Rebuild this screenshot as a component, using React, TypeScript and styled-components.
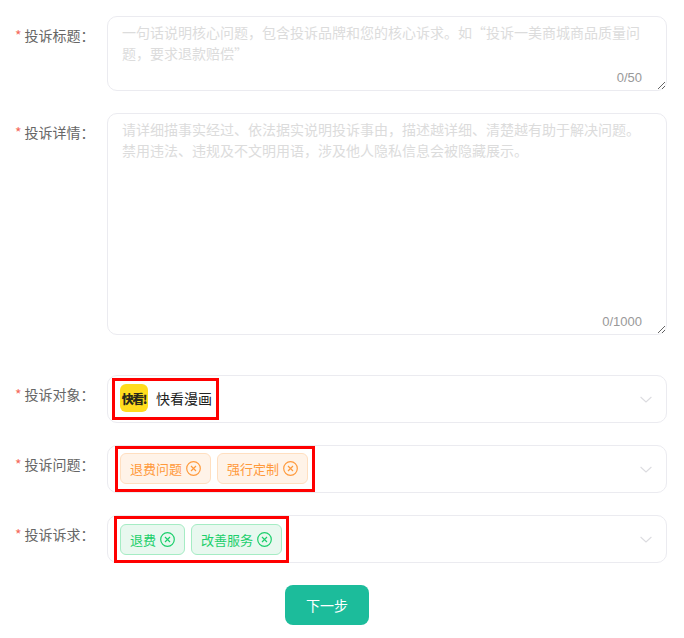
import React, { FunctionComponent } from 'react'
import styled, { createGlobalStyle } from 'styled-components'

const Global = createGlobalStyle`
  body {
    margin: 0;
    background: #fff;
    font-family: "Noto Sans CJK SC", "Liberation Sans", sans-serif;
  }
`

const Form = styled.form`
  width: 684px;
  height: 638px;
  box-sizing: border-box;
  padding: 16px 17px 0 15px;
  display: flex;
  flex-direction: column;
`

const Row = styled.div<{ $gap: number }>`
  display: flex;
  margin-bottom: ${({ $gap }) => $gap}px;
`

const Label = styled.label`
  width: 92px;
  flex-shrink: 0;
  font-size: 14px;
  line-height: 20px;
  color: #666;
  padding-top: 9px;
  white-space: nowrap;

  &::before {
    content: '*';
    color: #f5695a;
    margin-right: 3px;
  }
`

const AreaWrap = styled.div`
  position: relative;
  flex: 1;
  display: flex;
`

const Area = styled.textarea<{ $height: number }>`
  width: 100%;
  height: ${({ $height }) => $height}px;
  box-sizing: border-box;
  border: 1px solid #ebebf0;
  border-radius: 10px;
  padding: 5px 20px 6px 14px;
  font-family: inherit;
  font-size: 14px;
  line-height: 21px;
  color: #333;
  outline: none;
  resize: vertical;

  &::placeholder {
    color: #dcdcdc;
  }
`

const Counter = styled.span`
  position: absolute;
  right: 25px;
  bottom: 3px;
  font-family: "Liberation Sans", sans-serif;
  font-size: 13px;
  line-height: 20px;
  color: #999;
`

const Select = styled.div`
  flex: 1;
  height: 48px;
  box-sizing: border-box;
  border: 1px solid #ebebf0;
  border-radius: 10px;
  display: flex;
  align-items: center;
  justify-content: space-between;
  padding-right: 14px;
`

const Marked = styled.div<{ $left: number; $pad: string }>`
  display: flex;
  align-items: center;
  gap: 6px;
  margin-left: ${({ $left }) => $left}px;
  padding: ${({ $pad }) => $pad};
  border: 3px solid #f00;
`

const Logo = styled.span`
  width: 28px;
  height: 28px;
  border-radius: 6px;
  background: #ffdc1e;
  display: flex;
  align-items: center;
  justify-content: center;
  font-size: 12px;
  font-weight: 900;
  letter-spacing: -1.5px;
  color: #2a2a1a;
  white-space: nowrap;
  overflow: hidden;
`

const BrandName = styled.span`
  font-size: 14px;
  line-height: 20px;
  color: #222;
  margin-left: 2px;
`

const Tag = styled.span<{ $tone: 'orange' | 'green' }>`
  height: 31px;
  box-sizing: border-box;
  display: flex;
  align-items: center;
  gap: 4px;
  padding: 0 9px;
  font-size: 13px;
  border-radius: 6px;
  color: ${({ $tone }) => ($tone === 'orange' ? '#ff9a3c' : '#1ccf6c')};
  background: ${({ $tone }) => ($tone === 'orange' ? '#fff3e8' : '#e8f8ef')};
  border: 1px solid ${({ $tone }) => ($tone === 'orange' ? '#ffdfc0' : '#a5ecc4')};
`

const CloseIcon = styled.svg`
  width: 15px;
  height: 15px;
  fill: none;
  stroke: currentColor;
  stroke-width: 1.2;
  flex-shrink: 0;
`

const Chevron = styled.svg`
  width: 12px;
  height: 7px;
  fill: none;
  stroke: #dcdce0;
  stroke-width: 1.1;
`

const Actions = styled.div`
  display: flex;
  justify-content: center;
  padding-right: 28px;
`

const NextButton = styled.button`
  width: 84px;
  height: 40px;
  border: none;
  border-radius: 8px;
  background: #1cbc9b;
  color: #fff;
  font-family: inherit;
  font-size: 14px;
`

const Arrow: FunctionComponent = () => (
  <Chevron viewBox="0 0 12 7">
    <path d="M.6 1 6 6 11.4 1" />
  </Chevron>
)

const TagItem: FunctionComponent<{ text: string; tone: 'orange' | 'green' }> = ({ text, tone }) => (
  <Tag $tone={tone}>
    {text}
    <CloseIcon viewBox="0 0 15 15">
      <circle cx="7.5" cy="7.5" r="6.8" />
      <path d="M5 5 10 10M10 5 5 10" />
    </CloseIcon>
  </Tag>
)

export default function App() {
  return (
    <Form>
      <Global />
      <Row $gap={22}>
        <Label>投诉标题：</Label>
        <AreaWrap>
          <Area
            $height={75}
            placeholder="一句话说明核心问题，包含投诉品牌和您的核心诉求。如“投诉一美商城商品质量问题，要求退款赔偿”"
          />
          <Counter>0/50</Counter>
        </AreaWrap>
      </Row>
      <Row $gap={40}>
        <Label>投诉详情：</Label>
        <AreaWrap>
          <Area
            $height={222}
            placeholder="请详细描事实经过、依法据实说明投诉事由，描述越详细、清楚越有助于解决问题。禁用违法、违规及不文明用语，涉及他人隐私信息会被隐藏展示。"
          />
          <Counter>0/1000</Counter>
        </AreaWrap>
      </Row>
      <Row $gap={22}>
        <Label>投诉对象：</Label>
        <Select>
          <Marked $left={4} $pad="3px 4px 5px 5px">
            <Logo>快看!</Logo>
            <BrandName>快看漫画</BrandName>
          </Marked>
          <Arrow />
        </Select>
      </Row>
      <Row $gap={22}>
        <Label>投诉问题：</Label>
        <Select>
          <Marked $left={7} $pad="4px 4px 5px 2px">
            <TagItem text="退费问题" tone="orange" />
            <TagItem text="强行定制" tone="orange" />
          </Marked>
          <Arrow />
        </Select>
      </Row>
      <Row $gap={22}>
        <Label>投诉诉求：</Label>
        <Select>
          <Marked $left={6} $pad="5px 4px 5px 3px">
            <TagItem text="退费" tone="green" />
            <TagItem text="改善服务" tone="green" />
          </Marked>
          <Arrow />
        </Select>
      </Row>
      <Actions>
        <NextButton type="button">下一步</NextButton>
      </Actions>
    </Form>
  )
}
